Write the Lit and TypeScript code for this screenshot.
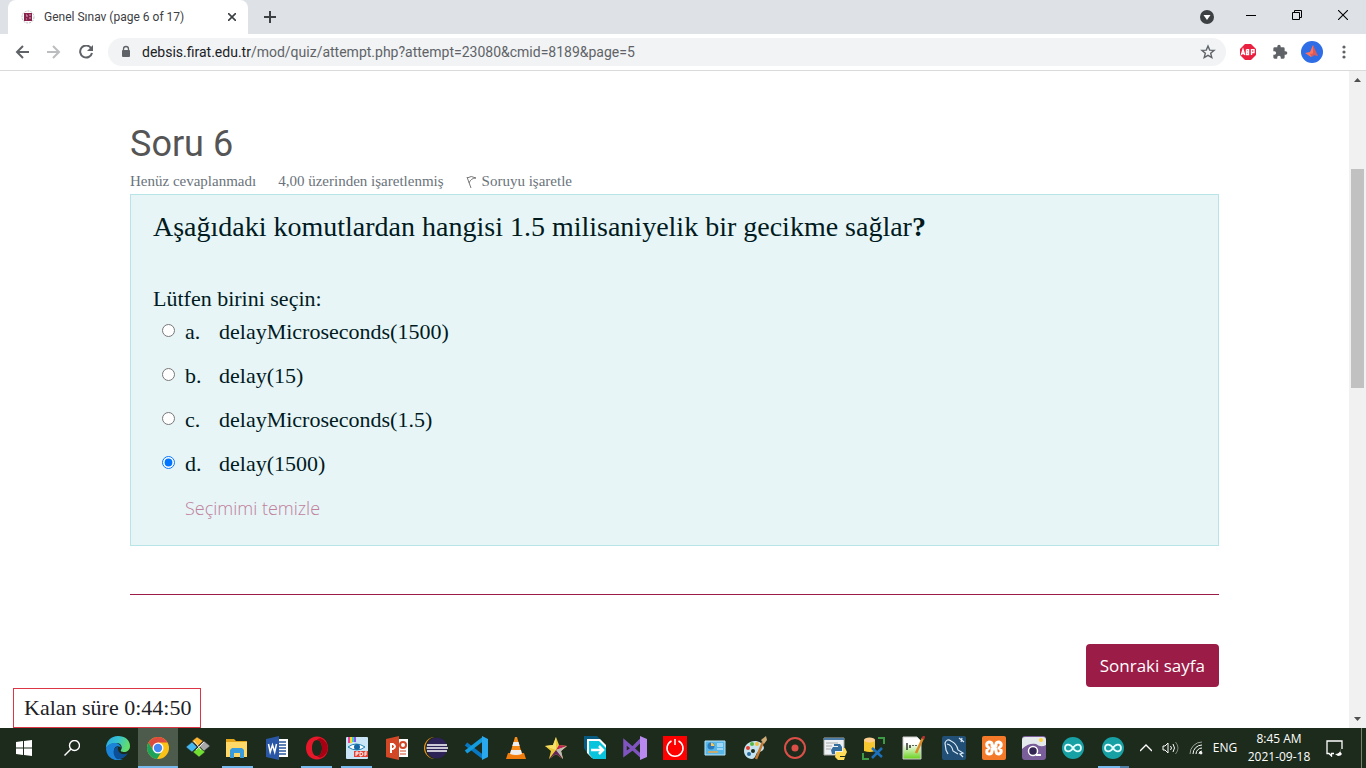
import { LitElement, html, css, svg } from "lit";
import { customElement, state } from "lit/decorators.js";

type Item = { name: string; icon: unknown; state?: string };

const shortcuts: Item[] = [
  { name: "Edge", icon: svg`<defs><linearGradient id="edge-top" x1="0" y1="0" x2="1" y2=".3"><stop offset="0" stop-color="#2aa9e0"/><stop offset=".5" stop-color="#35c1d4"/><stop offset="1" stop-color="#62dd6c"/></linearGradient></defs><path fill="url(#edge-top)" d="M0 12C0 5 5 0 12 0c7 0 12 4 12 10 0 4-3 6-6 6-2 0-4-1-3-2 2-3 0-7-4-7-5 0-9 2-11 5z"/><path fill="#1b84d8" d="M0 12c1-3 5-5 9-5 3 0 6 2 6 5-1-2-6-3-7 2-1 6 4 9 9 10-8 2-17-2-17-12z"/><path fill="#0d4f96" d="M8 14c1-3 3-3 4-3-1 6 5 9 10 6-3 5-8 7-11 6-3-2-4-6-3-9z"/>` },
  { name: "Chrome", state: "active", icon: svg`<circle cx="12" cy="12" r="11" fill="#fbc116"/><path fill="#dd4b3e" d="M2.500 6.500A11 11 0 0 1 21.500 6.500H12L7 14z"/><path fill="#1da25a" d="M2.500 6.500A11 11 0 0 0 11 23l5-8-9-1z"/><circle cx="12" cy="12" r="5.500" fill="#fff"/><circle cx="12" cy="12" r="4.200" fill="#4688f1"/>` },
  { name: "Workbench", icon: svg`<g stroke="#333" stroke-width=".5"><path fill="#ffb72d" d="m11 1 6 4-5 5-6-5z"/><path fill="#a8a8a8" d="m18 5 6 5-6 5-5-5z"/><path fill="#45b9ef" d="m6 6 5 5-5 5-6-5z"/><path fill="#70df31" d="m13 11 6 5-6 5-6-5z"/></g><path stroke="#fff" d="m8 5 7 9M18 6l-8 8" stroke-width=".8"/>` },
  { name: "Files", state: "open", icon: svg`<path fill="#e5a51b" d="M1 3h8l2 2h11v16H1z"/><path fill="#ffd867" d="M1 6h21v15H1z"/><path fill="#389bdb" d="M5 22v-8l2-2h10l2 2v8h-4v-5H9v5z"/>` },
  { name: "Word", icon: svg`<path fill="#fff" d="M12 3h11v18H12z"/><path stroke="#2b579a" stroke-width="1.300" d="M14 6h7M14 9h7M14 12h7M14 15h7M14 18h7"/><path fill="#2957a5" d="m1 3 13-3v24L1 21z"/><path fill="none" stroke="#fff" stroke-width="1.500" d="m3.500 8 1.700 8L7.500 9l2.200 7 1.800-8"/>` },
  { name: "Opera", state: "open", icon: svg`<path fill="#e61829" fill-rule="evenodd" d="M12 .5c6.500 0 11 5 11 11.500s-4.500 11.500-11 11.500S1 18.500 1 12 5.500.5 12 .5zM12 4c-3 0-5 3.500-5 8s2 8 5 8 5-3.500 5-8-2-8-5-8z"/><path fill="#a70014" d="M16 2.500c9 4 9 15 0 19-2 .5-3-.5-4-1.500 3 0 5-3.500 5-8s-2-8-5-8c1-1 2-2 4-1.500z"/>` },
  { name: "PDF viewer", state: "open", icon: svg`<rect x="1" y="1" width="22" height="22" rx="1" fill="#cae6f6"/><path stroke="#e4a" stroke-width="2" d="M4 1v6"/><path stroke="#fd2" stroke-width="2" d="M6 1v6"/><path stroke="#4cc" stroke-width="2" d="M8 1v5"/><path stroke="#85e" stroke-width="2" d="M10 1v5"/><path fill="#fff" stroke="#2383b2" d="M3 11q8-6 17 0-8 6-17 0"/><circle cx="12" cy="11" r="3" fill="#1467a4"/><path fill="#e44132" d="M9 15h14v6H9z"/><path fill="none" stroke="#fff" d="M11 20v-4h2v2h-2M15 16v4q3 0 3-2t-3-2M20 20v-4h2M20 18h2"/>` },
  { name: "PowerPoint", icon: svg`<path fill="#fff" d="M13 3h10v18H13z"/><path stroke="#d24726" d="M15 15h6M15 18h6"/><circle cx="18" cy="9" r="3" fill="none" stroke="#d24726" stroke-width="2"/><path fill="#d24726" d="m1 3 13-3v24L1 21z"/><path fill="none" stroke="#fff" stroke-width="2" d="M6 17V8h2q4 2.500 0 5H6"/>` },
  { name: "Eclipse", icon: svg`<circle cx="11" cy="12" r="11" fill="#f7941e"/><circle cx="12.500" cy="12" r="11.300" fill="#1c2b1b"/><circle cx="13" cy="12" r="10.500" fill="#2c2255"/><path stroke="#fff" stroke-width="1.600" d="M3 9h20M2.500 12h21.500M3 15h20"/>` },
  { name: "Code", icon: svg`<path fill="none" stroke="#0878c5" stroke-width="4" d="m2 8 17 13"/><path fill="none" stroke="#139bdd" stroke-width="4" d="m2 16 17-13"/><path fill="#29a8ee" d="m18 0 6 3v18l-6 3z"/>` },
  { name: "VLC", icon: svg`<path fill="#f17c0b" d="M4 17h16l2 6H2z"/><path fill="#f78b19" d="m11 1h2l5 17q-6 3-12 0z"/><path fill="#eee" d="m9.500 6h5l1.200 4H8.300zM7 14h10l1 4q-6 2-12 0z"/>` },
  { name: "Star", icon: svg`<path fill="#edc938" d="m12 1 3 8 8 1-6 5 2 8-7-5-7 5 2-8-6-5 8-1z"/><path fill="#bd2456" d="m12 14 3-5 8 1z"/><path fill="#f5e06a" d="M12 1v13L1 10l8-1z"/><path fill="#bbb" d="m12 14 11-4-6 5 2 8z"/><path fill="#64235e" d="m12 14 7 9-7-5-7 5z"/>` },
  { name: "Transfer", icon: svg`<path fill="#075b80" d="M0 0h13l5 5-9 14-6-2-3-5z"/><path fill="#fff" d="M3 3h13l6 6v13H8l-5-5z"/><path fill="#08c4dc" d="M5 5h10l7 7v11H9l-4-5z"/><path fill="none" stroke="#fff" stroke-width="2.500" d="M7 14h12M15 10l4 4-4 4"/>` },
  { name: "Visual Studio", icon: svg`<path fill="none" stroke="#8054bf" stroke-width="3.500" d="m18 4-9 9-7 5V6l7 6 9 8"/><path fill="#b88af0" d="m17 0 7 3v18l-7 3z"/>` },
  { name: "Power", icon: svg`<path fill="#fe0000" d="M0 0h24v24H0z"/><path fill="none" stroke="#fff" stroke-width="1.500" d="M8.500 5a8 8 0 1 0 7 0M12 3v6"/>` },
  { name: "Control panel", icon: svg`<path fill="#58b6e9" stroke="#b5e5fc" d="M2 5h20v14H2z"/><circle cx="8" cy="10" r="3.500" fill="#287bbf"/><path fill="#ffc54f" d="M8 6.500V10h3.500Q11 7 8 6.500"/><path stroke="#e6faff" d="M14 8h6M14 10h6M14 13h6"/><path stroke="#e8a849" stroke-width="1.500" d="M5 16h10"/>` },
  { name: "Paint", icon: svg`<path fill="#c5e2ef" d="M1 15C1 7 11 2 18 7c5 4 3 8-2 9-4 0-2 6-7 7-5 0-8-4-8-8z"/><circle cx="5" cy="12" r="2" fill="#e63c30"/><circle cx="9" cy="8" r="2" fill="#57b742"/><circle cx="14" cy="8" r="2" fill="#f5bd37"/><circle cx="10" cy="15" r="2" fill="#1c2b1b"/><circle cx="6" cy="18" r="2" fill="#286da4"/><path stroke="#c57a31" stroke-width="2.500" d="m20 6-7 17"/><path fill="#d1ab75" d="m18 4 5-4 1 4-3 4z"/>` },
  { name: "Recorder", icon: svg`<circle cx="12" cy="12" r="10" fill="none" stroke="#dc4f48" stroke-width="2"/><circle cx="12" cy="12" r="3.500" fill="#dc4f48"/>` },
  { name: "Python", icon: svg`<path fill="#eef0f3" stroke="#aaa" d="M1 2h20v17H1z"/><path fill="#4e7ea8" d="M1 2h20v2H1z"/><path stroke="#aaa" d="M3 7h12M3 10h6M3 13h5"/><path fill="#356e9f" d="M11 8h6l2 3v4h-7v3H9l-1-4 2-3h5v-1h-4z"/><path fill="#ffdb57" d="M20 12h2l2 4-2 4h-5v1h5l-1 3h-6l-3-3 1-5h7z"/>` },
  { name: "SQL tools", icon: svg`<path fill="none" stroke="#3d9b45" stroke-width="2" d="M16 2h6v6M1 17v6h6"/><path fill="#f7c72f" d="M2 4h11v11q-5 2-11 0z"/><ellipse cx="7.500" cy="4" rx="5.500" ry="2.500" fill="#ffcf90"/><path stroke="#1c70bc" stroke-width="2.500" d="m10 12 10 9M20 12 10 22"/>` },
  { name: "Notepad", icon: svg`<defs><linearGradient id="note-fill" x2="0" y2="1"><stop offset=".3" stop-color="#fff"/><stop offset="1" stop-color="#69d11c"/></linearGradient></defs><path fill="url(#note-fill)" stroke="#ccc" d="M1 1h14l4 4v18H1z"/><path stroke="#333" stroke-width="1.500" d="M5 7v7M8 9v3M11 9v1M14 9v1"/><path stroke="#d98b28" stroke-width="2.500" d="m21 2-7 15"/><path stroke="#b33" stroke-width="2.500" d="m22 0-1 3"/>` },
  { name: "MySQL", icon: svg`<rect width="24" height="24" rx="2" fill="#214f76"/><path fill="none" stroke="#dceaf6" stroke-width="1.200" d="m6 18-2-4-1-7q2-5 6-2 6 3 7 9l5 3-3 1 3 3M5 8q5 1 6 7l5 3M17 2l5 4M20 2l-1 4"/>` },
  { name: "XAMPP", icon: svg`<rect width="24" height="24" rx="2" fill="#f47929"/><path fill="none" stroke="#fff" stroke-width="3" stroke-linejoin="round" d="M10 10V8q0-2-3-2-3 1-2 4l2 2-2 2q-1 4 2 4 3 0 3-3v-2h4v2q0 3 3 3 3-1 2-4l-2-2 2-2q1-3-2-4-3 0-3 2v2z"/>` },
  { name: "Photo search", icon: svg`<rect width="24" height="24" rx="3" fill="#7a5e9a"/><path fill="#e4e9eb" d="M3 1h18q3 0 3 3v5q-5 3-10-1-8-1-14 5V4q0-3 3-3z"/><circle cx="19" cy="4" r="2" fill="#ffd339"/><circle cx="11" cy="15" r="4.500" fill="#332653" stroke="#fff" stroke-width="1.500"/><path stroke="#fff" stroke-width="2" d="M14 19h5"/>` },
  { name: "Arduino", icon: svg`<circle cx="12" cy="12" r="11" fill="#17a1a5"/><path fill="none" stroke="#e8ffff" stroke-width="1.700" d="M12 12c-3-5-8-4-8 0s5 5 8 0 8-4 8 0-5 5-8 0z"/>` },
  { name: "Arduino sketch", state: "stacked", icon: svg`<circle cx="12" cy="12" r="11" fill="#17a1a5"/><path fill="none" stroke="#e8ffff" stroke-width="1.700" d="M12 12c-3-5-8-4-8 0s5 5 8 0 8-4 8 0-5 5-8 0z"/>` },
];

const answers = [
  { key: "a", text: "delayMicroseconds(1500)" },
  { key: "b", text: "delay(15)" },
  { key: "c", text: "delayMicroseconds(1.5)" },
  { key: "d", text: "delay(1500)" },
];

@customElement("browser-bar")
export class BrowserBar extends LitElement {
  static styles = css`
    :host { display: block; font-family: Roboto, "Noto Sans", sans-serif; color: #3c4043; }
    button { border: 0; padding: 0; background: none; color: inherit; display: grid; place-items: center; }
    svg { display: block; fill: none; stroke: currentColor; }
    .strip { height: 34px; display: flex; background: #dee1e6; }
    .tab { height: 34px; width: 240px; margin-left: 8px; padding: 0 8px 0 13px; box-sizing: border-box; border-radius: 8px 8px 0 0; background: #fff; display: flex; align-items: center; font-size: 12px; }
    .title { flex: 1; margin-left: 9px; white-space: nowrap; }
    .close { width: 16px; height: 16px; }
    .add { width: 44px; }
    .spacer { flex: 1; }
    .caption { width: 46px; height: 29px; color: #000; }
    .menu { width: 42px; }
    .bar { height: 36px; padding: 0 8px; display: flex; align-items: center; border-bottom: 1px solid #d9dadc; background: #fff; color: #5f6368; }
    .nav { width: 28px; height: 28px; margin-right: 4px; }
    .nav[disabled] { color: #bbbdbf; }
    .address { flex: 1; height: 28px; margin: 0 6px 0 4px; padding: 0 10px 0 12px; border-radius: 14px; background: #f1f3f4; display: flex; align-items: center; font-size: 14px; }
    .url { flex: 1; margin-left: 10px; color: #5f6368; text-decoration: none; }
    .host { color: #202124; }
    .tool { width: 32px; height: 28px; }
    .last { width: 24px; margin-left: 4px; margin-right: 2px; }
  `;
  render() {
    return html`
      <div class="strip">
        <div class="tab">
          <svg width="14" height="14" viewBox="0 0 14 14"><circle cx="7" cy="7" r="6" stroke="#bbb" stroke-dasharray="2 1"/><path d="M3 3h8v8H3z" fill="#87234d" stroke="none"/><path d="M5 5h1v2M9 4v2M8 8h2M5 9h1" stroke="#d9a9bd"/></svg>
          <span class="title">Genel Sınav (page 6 of 17)</span>
          <button class="close" aria-label="Close tab"><svg width="8" height="8" stroke-width="1.600"><path d="m0 0 8 8M8 0 0 8"/></svg></button>
        </div>
        <button class="add" aria-label="New tab"><svg width="12" height="12" stroke-width="2"><path d="M6 0v12M0 6h12"/></svg></button>
        <span class="spacer"></span>
        <button class="menu" aria-label="Search tabs"><svg width="14" height="14"><circle cx="7" cy="7" r="7" fill="#3c4043" stroke="none"/><path fill="#fff" stroke="none" d="M3.500 5h7L7 10z"/></svg></button>
        <button class="caption" aria-label="Minimize"><svg width="10" height="10"><path d="M0 5.500h10"/></svg></button>
        <button class="caption" aria-label="Restore"><svg width="10" height="10"><path d="M.5 2.500h7v7h-7zM2.500 2V.5h7v7H8"/></svg></button>
        <button class="caption" aria-label="Close"><svg width="10" height="10" stroke-width="1.100"><path d="m0 0 10 10M10 0 0 10"/></svg></button>
      </div>
      <div class="bar">
        <button class="nav" aria-label="Back"><svg width="14" height="14" stroke-width="2"><path d="M14 7H2M8 1 2 7l6 6"/></svg></button>
        <button class="nav" aria-label="Forward" disabled><svg width="14" height="14" stroke-width="2"><path d="M0 7h12M6 1l6 6-6 6"/></svg></button>
        <button class="nav" aria-label="Reload"><svg width="14" height="14" stroke-width="2"><path d="M12 3a6 6 0 1 0 1 5"/><path fill="currentColor" stroke="none" d="M14 0v6H8z"/></svg></button>
        <div class="address">
          <svg width="12" height="14"><path d="M3.500 6V4a2.500 2.500 0 0 1 5 0v2" stroke-width="1.300"/><path fill="currentColor" stroke="none" d="M3 5h6q1 0 1 1v5q0 1-1 1H3q-1 0-1-1V6q0-1 1-1z"/></svg>
          <a class="url" href="#"><span class="host">debsis.firat.edu.tr</span>/mod/quiz/attempt.php?attempt=23080&amp;cmid=8189&amp;page=5</a>
          <svg width="16" height="16" stroke-width="1.400"><path d="m8 2 1.700 4.100 4.400.3-3.400 2.900 1.100 4.300L8 11.300l-3.800 2.300 1.100-4.300-3.400-2.900 4.400-.3z"/></svg>
        </div>
        <button class="tool" aria-label="Adblock"><svg width="16" height="16"><path fill="#e9203f" stroke="none" d="M5 0h6l5 5v6l-5 5H5l-5-5V5z"/><g stroke="#fff" stroke-width="1.400"><path d="m1.300 11 1.700-5.500L4.700 11M2 9.500h2M6.500 5.500v5h2v-2.500h-2 2V5.600h-2M11.500 11V5.600h2.500V8.500h-2.500"/></g></svg></button>
        <button class="tool" aria-label="Extensions"><svg width="16" height="16" viewBox="0 0 24 24"><path fill="currentColor" stroke="none" d="M20.500 11H19V7a2 2 0 0 0-2-2h-4V3.500a2.500 2.500 0 0 0-5 0V5H4a2 2 0 0 0-2 2v3.800h1.500a2.700 2.700 0 0 1 0 5.400H2V20a2 2 0 0 0 2 2h3.800v-1.500a2.700 2.700 0 0 1 5.400 0V22H17a2 2 0 0 0 2-2v-4h1.500a2.500 2.500 0 0 0 0-5z"/></svg></button>
        <button class="tool" aria-label="Profile"><svg width="22" height="22"><circle cx="11" cy="11" r="11" fill="#2f6de6" stroke="none"/><path fill="#ff745d" stroke="none" d="m12 4 2 9-4 3-6-4 5-1z"/><path fill="#d95b5c" stroke="none" d="m12 4 5 11-5-1zM9 13l5-1-3 4z"/></svg></button>
        <button class="last" aria-label="Menu"><svg width="4" height="14"><g fill="currentColor" stroke="none"><circle cx="2" cy="2" r="1.600"/><circle cx="2" cy="7" r="1.600"/><circle cx="2" cy="12" r="1.600"/></g></svg></button>
      </div>`;
  }
}

@customElement("quiz-page")
export class QuizPage extends LitElement {
  @state() selected = "d";
  static styles = css`
    :host { display: flex; position: relative; overflow: hidden; background: #fff; font-family: "Liberation Serif", serif; color: #001a1e; }
    .content { flex: 1; padding: 51px 130px 0; }
    h1 { margin: 0; font: 400 36px/44px Roboto, sans-serif; color: #555; }
    .info { display: flex; gap: 22px; padding: 5px 0 3px; align-items: center; font-size: 15px; line-height: 20px; color: #6a737b; }
    .flag { display: flex; align-items: center; gap: 5px; color: inherit; text-decoration: none; }
    .question { border: 1px solid #b8e4e8; background: #e7f5f7; padding: 12px 22px 21px; }
    h2 { margin: 0 0 35px; font-size: 28px; line-height: 40px; font-weight: 400; }
    fieldset { margin: 0; padding: 0; border: 0; font-size: 22px; }
    legend { padding: 0; line-height: 34px; }
    .answer { display: grid; grid-template-columns: 23px 34px auto; justify-content: start; align-items: start; margin: 0 0 12px 9px; line-height: 32px; }
    input { width: 13px; height: 13px; margin: 8px 0 0; accent-color: #0075ff; }
    .clear { border: 0; background: none; padding: 0; display: block; margin-left: 32px; font: 300 18px/32px "Open Sans", sans-serif; color: #c07f9a; }
    .rule { height: 1px; border: 0; background: #9b1c47; margin: 48px 0 49px; }
    .next { display: block; margin-left: auto; height: 43px; padding: 0 14px; border: 0; border-radius: 4px; background: #9b1c47; color: #fff; font: 400 17px/24px "Open Sans", sans-serif; }
    .timer { position: absolute; left: 13px; bottom: 0; height: 40px; padding: 0 9px 0 10px; box-sizing: border-box; border: 1px solid #dc3545; background: #fff; color: #1d2125; font-size: 22px; line-height: 38px; }
    .scroll { width: 17px; background: #f1f1f1; display: flex; flex-direction: column; align-items: center; justify-content: space-between; padding: 6px 0; box-sizing: border-box; }
    .track { flex: 1; width: 13px; display: grid; grid-template-rows: 86fr 218fr 326fr; }
    .thumb { grid-row: 2; background: #c1c1c1; }
    svg { display: block; }
  `;
  render() {
    return html`
      <main class="content">
        <h1>Soru 6</h1>
        <div class="info"><span>Henüz cevaplanmadı</span><span>4,00 üzerinden işaretlenmiş</span><a class="flag" href="#"><svg width="11" height="13" fill="none" stroke="#777"><path d="m1 2 4 11M1 3q4-3 9 0-5 0-7 5"/></svg>Soruyu işaretle</a></div>
        <section class="question">
          <h2>Aşağıdaki komutlardan hangisi 1.5 milisaniyelik bir gecikme sağlar<b>?</b></h2>
          <fieldset>
            <legend>Lütfen birini seçin:</legend>
            ${answers.map((a) => html`<label class="answer"><input type="radio" name="answer" .checked=${this.selected === a.key} @change=${() => (this.selected = a.key)}><span>${a.key}.</span><span>${a.text}</span></label>`)}
          </fieldset>
          <button class="clear" @click=${() => (this.selected = "")}>Seçimimi temizle</button>
        </section>
        <hr class="rule">
        <button class="next">Sonraki sayfa</button>
      </main>
      <div class="timer">Kalan süre 0:44:50</div>
      <div class="scroll"><svg width="7" height="5" fill="#505050"><path d="M0 5 3.500 1 7 5z"/></svg><div class="track"><div class="thumb"></div></div><svg width="7" height="5" fill="#505050"><path d="m0 0 3.500 4L7 0z"/></svg></div>`;
  }
}

@customElement("task-bar")
export class TaskBar extends LitElement {
  static styles = css`
    :host { display: flex; height: 40px; background: #1c2b1b; color: #fff; font: 12px/18px "Open Sans", sans-serif; }
    button { border: 0; padding: 0; background: none; color: inherit; font: inherit; display: grid; place-items: center; }
    svg { display: block; fill: none; stroke: currentColor; }
    .start { width: 48px; }
    .apps { display: flex; flex: 1; max-width: 1037px; margin-left: 2px; }
    .app { flex: 1; background: no-repeat center bottom / calc(100% - 9px) 2px; }
    .app svg { stroke: none; }
    .open { background-image: linear-gradient(#76b9ed, #76b9ed); }
    .stacked { background-image: linear-gradient(90deg, #76b9ed 72%, #4f7fa6 72%); }
    .active { background-color: #4c5b4c; background-image: linear-gradient(#76b9ed, #76b9ed); background-size: 100% 2px; }
    .tray { margin-left: auto; display: flex; align-items: center; }
    .icon { width: 25px; }
    .lang { width: 34px; }
    .clock { width: 74px; text-align: center; }
    .notes { width: 36px; }
    .desktop { width: 4px; height: 40px; margin-left: 9px; border-left: 1px solid #77826f; }
  `;
  render() {
    return html`
      <button class="start" aria-label="Start"><svg width="16" height="16"><path fill="#fff" stroke="none" d="m0 2 7-1v6.500H0zM8 .9 16 0v7.500H8zM0 8.500h7V15l-7-1zM8 8.500h8V16l-8-1z"/></svg></button>
      <button class="start" aria-label="Search"><svg width="16" height="16" stroke-width="1.400"><circle cx="10.500" cy="5.500" r="5"/><path d="M7 9 .5 15.500"/></svg></button>
      <div class="apps">${shortcuts.map((s) => html`<button class="app ${s.state ?? ""}" aria-label=${s.name}><svg width="24" height="24" viewBox="0 0 24 24">${s.icon}</svg></button>`)}</div>
      <div class="tray">
        <button class="icon" aria-label="Hidden icons"><svg width="12" height="8" stroke-width="1.400"><path d="m0 7 6-6 6 6"/></svg></button>
        <button class="icon" aria-label="Volume"><svg width="17" height="14"><path d="M1 5v4h2l3 3V2L3 5zM8.500 5q2 2 0 4M11 3q3 4 0 8"/><path stroke="#7c857b" d="M13.500 1q5 6 0 12"/></svg></button>
        <button class="icon" aria-label="Network"><svg width="14" height="14"><path stroke="#9ba39a" d="M1 13A12 12 0 0 1 13 1"/><path d="M4 13a9 9 0 0 1 9-9M7 13a6 6 0 0 1 6-6"/><path d="M10 13a3 3 0 0 1 3-3"/><circle cx="12" cy="12" r="1" fill="#fff"/></svg></button>
        <button class="lang">ENG</button>
        <div class="clock">8:45 AM<br>2021-09-18</div>
        <button class="notes" aria-label="Notifications"><svg width="17" height="17" stroke-width="1.300"><path d="M8 13.500H5.500V16L3 13.500H1V1h15v8"/><path fill="#fff" stroke="none" d="M15 9q-2 2 1 5-1 2-4 2l-3-2q5 0 6-5z"/></svg></button>
        <div class="desktop"></div>
      </div>`;
  }
}

@customElement("app-root")
export class AppRoot extends LitElement {
  static styles = css`
    :host { display: grid; grid-template-rows: auto 1fr auto; height: 100vh; overflow: hidden; }
  `;
  render() {
    return html`<browser-bar></browser-bar><quiz-page></quiz-page><task-bar></task-bar>`;
  }
}
